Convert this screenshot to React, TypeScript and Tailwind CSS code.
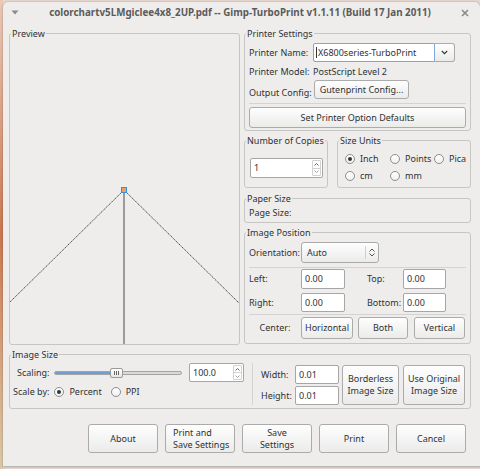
import React from "react";

type Kids = { className?: string; children?: React.ReactNode };

function Frame({ label, className = "", children }: Kids & { label: string }) {
  return (
    <fieldset className={`min-w-0 rounded-[3px] border border-[#c6c6c4] ${className}`}>
      <legend className="ml-[1px] px-[1px] leading-[13px]">{label}</legend>
      {children}
    </fieldset>
  );
}

function Btn({ className = "", children }: Kids) {
  return (
    <div
      className={`flex items-center justify-center text-center rounded-[3px] border border-[#ababab] bg-linear-to-b from-[#fefefe] to-[#ebebea] leading-[12px] ${className}`}
    >
      {children}
    </div>
  );
}

function Field({ className = "", children }: Kids) {
  return (
    <div className={`flex items-center bg-white border border-[#a6a6a6] rounded-[2px] pl-[3px] ${className}`}>
      {children}
    </div>
  );
}

function SpinBox({ className = "", children }: Kids) {
  return (
    <div className={`flex bg-white border border-[#a6a6a6] rounded-[2px] ${className}`}>
      <span className="flex-1 flex items-center pl-[3px]">{children}</span>
      <span className="flex flex-col w-[9px] my-[1px] mr-[1px] border border-[#d2d2d2] rounded-[1px]">
        <span className="flex-1 flex items-center justify-center border-b border-[#d2d2d2]">
          <svg width="5" height="3" viewBox="0 0 5 3">
            <path d="M0.5 2.5 L2.5 0.5 L4.5 2.5" fill="none" stroke="#555" strokeWidth="0.9" />
          </svg>
        </span>
        <span className="flex-1 flex items-center justify-center">
          <svg width="5" height="3" viewBox="0 0 5 3">
            <path d="M0.5 0.5 L2.5 2.5 L4.5 0.5" fill="none" stroke="#999" strokeWidth="0.9" />
          </svg>
        </span>
      </span>
    </div>
  );
}

function Radio({ checked = false, children }: Kids & { checked?: boolean }) {
  return (
    <span className="flex items-center gap-[5px]">
      <span className="w-[10px] h-[10px] rounded-full border border-[#8e8e8e] bg-linear-to-b from-white to-[#f0f0f0] flex items-center justify-center">
        {checked && <span className="w-[4px] h-[4px] rounded-full bg-[#333]" />}
      </span>
      {children}
    </span>
  );
}

function Sep({ className = "" }: Kids) {
  return <div className={`h-px bg-[#d3d3d1] ${className}`} />;
}

export default function App() {
  return (
    <div className="w-[480px] h-[469px] flex overflow-hidden bg-[#e9d8cf] font-['Noto_Sans',sans-serif] text-[9px] text-[#2f3233]">
      <div className="w-[3px] h-full bg-linear-to-b from-[#e8c9b8] via-[#c9774f] to-[#d9c9a8]" />
      <div className="flex-1 mt-[2px] h-[465px] flex flex-col bg-[#eeedeb] rounded-t-[5px] border-b border-[#b9b9b7] shadow-[0_0_2px_rgba(0,0,0,0.35)]">
        {/* title bar */}
        <div className="h-[22px] flex items-center pl-[8px] pr-[11px] text-[#5b5b5b]">
          <svg width="8" height="5" viewBox="0 0 8 5" className="mb-[1px]">
            <path d="M0.5 0.5 H7.5 L4 4.5 Z" fill="#8a8a8a" />
          </svg>
          <span className="flex-1 text-center font-bold text-[9.8px]">
            colorchartv5LMgiclee4x8_2UP.pdf -- Gimp-TurboPrint v1.1.11 (Build 17 Jan 2011)
          </span>
          <svg width="8" height="8" viewBox="0 0 8 8">
            <path d="M1 1 L7 7 M7 1 L1 7" stroke="#8a8a8a" strokeWidth="1.6" />
          </svg>
        </div>

        <div className="flex gap-[4px] pl-[6px] mt-[3px]">
          <Frame label="Preview" className="w-[231px] h-[318px]">
            <svg width="229" height="304" viewBox="0 0 229 304" className="block">
              <line x1="114" y1="150" x2="114" y2="304" stroke="#9c9c9c" strokeWidth="2" />
              <line x1="114" y1="150" x2="0" y2="262" stroke="#222" strokeWidth="0.8" strokeDasharray="1.5 0.7" />
              <line x1="114" y1="150" x2="229" y2="263" stroke="#222" strokeWidth="0.8" strokeDasharray="1.5 0.7" />
              <rect x="111.5" y="147.5" width="5" height="5" fill="#e8a070" stroke="#3b8fe0" strokeWidth="1" />
            </svg>
          </Frame>

          <div className="w-[227px] flex flex-col">
            <Frame label="Printer Settings" className="h-[104px]">
              <div className="flex items-center mt-[3px] h-[19px] pl-[4px]">
                <span className="w-[64px]">Printer Name:</span>
                <div className="w-[122px] h-[19px] flex items-center bg-white border border-[#7fa6d6] rounded-l-[2px] pl-[2px]">
                  <span className="w-px h-[11px] bg-[#333] mr-[1px]" />
                  X6800series-TurboPrint
                </div>
                <Btn className="w-[20px] h-[19px] rounded-l-none border-l-0">
                  <svg width="7" height="5" viewBox="0 0 7 5">
                    <path d="M0.8 1 L3.5 3.7 L6.2 1" fill="none" stroke="#333" strokeWidth="1.1" />
                  </svg>
                </Btn>
              </div>
              <div className="flex items-center h-[14px] mt-[3px] pl-[4px]">
                <span className="w-[64px]">Printer Model:</span>
                <span>PostScript Level 2</span>
              </div>
              <div className="flex items-end h-[19px] mt-[1px] pl-[4px]">
                <span className="w-[65px] leading-[13px]">Output Config:</span>
                <Btn className="w-[95px] h-[19px]">Gutenprint Config...</Btn>
              </div>
              <Sep className="mt-[4px] mx-[4px]" />
              <Btn className="mt-[3px] ml-[4px] w-[217px] h-[21px]">Set Printer Option Defaults</Btn>
            </Frame>

            <div className="flex gap-[9px] h-[54px] mt-[3px]">
              <Frame label="Number of Copies" className="w-[84px]">
                <SpinBox className="mt-[11px] ml-[5px] w-[73px] h-[20px]">1</SpinBox>
              </Frame>
              <Frame label="Size Units" className="flex-1">
                <div className="grid grid-cols-[45px_44px_auto] auto-rows-[17px] items-center pl-[7px] pt-[3px] whitespace-nowrap">
                  <Radio checked>Inch</Radio>
                  <Radio>Points</Radio>
                  <Radio>Pica</Radio>
                  <Radio>cm</Radio>
                  <Radio>mm</Radio>
                </div>
              </Frame>
            </div>

            <Frame label="Paper Size" className="h-[31px] mt-[4px]">
              <div className="pl-[4px] leading-[13px] mt-[1px]">Page Size:</div>
            </Frame>

            <Frame label="Image Position" className="h-[118px] mt-[3px]">
              <div className="flex items-center mt-[3px] pl-[4px]">
                <span className="w-[52px]">Orientation:</span>
                <Btn className="w-[78px] h-[21px] justify-start">
                  <span className="flex-1 text-left pl-[5px]">Auto</span>
                  <span className="w-px h-[13px] bg-[#cfcfcf]" />
                  <svg width="12" height="9" viewBox="0 0 12 9">
                    <path d="M3.5 3.5 L6 1 L8.5 3.5 M3.5 5.5 L6 8 L8.5 5.5" fill="none" stroke="#444" strokeWidth="0.9" />
                  </svg>
                </Btn>
              </div>
              <Sep className="mt-[4px] mx-[4px]" />
              <div className="flex items-center mt-[1px] pl-[4px] h-[20px]">
                <span className="w-[52px]">Left:</span>
                <Field className="w-[44px] h-[20px]">0.00</Field>
                <span className="w-[58px] pl-[22px]">Top:</span>
                <Field className="w-[43px] h-[20px]">0.00</Field>
              </div>
              <div className="flex items-center mt-[4px] pl-[4px] h-[19px]">
                <span className="w-[52px]">Right:</span>
                <Field className="w-[44px] h-[19px]">0.00</Field>
                <span className="w-[58px] pl-[22px]">Bottom:</span>
                <Field className="w-[43px] h-[19px]">0.00</Field>
              </div>
              <Sep className="mt-[2px] mx-[4px]" />
              <div className="flex items-center mt-[2px] pl-[4px] h-[22px]">
                <span className="w-[52px] text-center">Center:</span>
                <Btn className="w-[52px] h-[22px]">Horizontal</Btn>
                <Btn className="w-[50px] h-[22px] ml-[5px]">Both</Btn>
                <Btn className="w-[51px] h-[22px] ml-[6px]">Vertical</Btn>
              </div>
            </Frame>
          </div>
        </div>

        <Frame label="Image Size" className="ml-[6px] w-[462px] h-[61px] mt-[3px]">
          <div className="flex">
            <div className="w-[242px] flex flex-col">
              <div className="flex items-center h-[19px] mt-[2px] pl-[7px]">
                <span className="w-[37px]">Scaling:</span>
                <div className="relative w-[128px] h-[4px] rounded-[2px] border border-[#a4a4a4] bg-[#d9d9d9]">
                  <div className="h-full w-[56px] rounded-l-[2px] bg-[#6e9ed6]" />
                  <div className="absolute left-[55px] top-[-4px] w-[13px] h-[10px] rounded-[2px] border border-[#9a9a9a] bg-linear-to-b from-white to-[#e6e6e6] flex items-center justify-center gap-[1px]">
                    <span className="w-px h-[4px] bg-[#666]" />
                    <span className="w-px h-[4px] bg-[#666]" />
                    <span className="w-px h-[4px] bg-[#666]" />
                  </div>
                </div>
                <SpinBox className="ml-[7px] w-[55px] h-[19px]">100.0</SpinBox>
              </div>
              <div className="flex items-center h-[14px] mt-[3px] pl-[3px] gap-[5px]">
                <span>Scale by:</span>
                <span className="flex items-center gap-[9px]">
                  <Radio checked>Percent</Radio>
                  <Radio>PPI</Radio>
                </span>
              </div>
            </div>
            <div className="w-px h-[42px] mt-[2px] bg-[#d3d3d1]" />
            <div className="flex flex-col gap-[2px] pl-[8px] mt-[4px]">
              <div className="flex items-center h-[19px]">
                <span className="w-[34px]">Width:</span>
                <Field className="w-[44px] h-[19px]">0.01</Field>
              </div>
              <div className="flex items-center h-[19px]">
                <span className="w-[34px]">Height:</span>
                <Field className="w-[44px] h-[19px]">0.01</Field>
              </div>
            </div>
            <Btn className="w-[57px] h-[40px] mt-[4px] ml-[3px]">
              Borderless
              <br />
              Image Size
            </Btn>
            <Btn className="w-[62px] h-[40px] mt-[4px] ml-[4px]">
              Use Original
              <br />
              Image Size
            </Btn>
          </div>
        </Frame>

        <div className="flex justify-end gap-[7px] pr-[14px] mt-[15px]">
          <Btn className="w-[70px] h-[29px]">About</Btn>
          <Btn className="w-[70px] h-[29px] justify-start text-left pl-[7px]">
            Print and
            <br />
            Save Settings
          </Btn>
          <Btn className="w-[70px] h-[29px]">
            Save
            <br />
            Settings
          </Btn>
          <Btn className="w-[70px] h-[29px]">Print</Btn>
          <Btn className="w-[70px] h-[29px]">Cancel</Btn>
        </div>
      </div>
    </div>
  );
}
